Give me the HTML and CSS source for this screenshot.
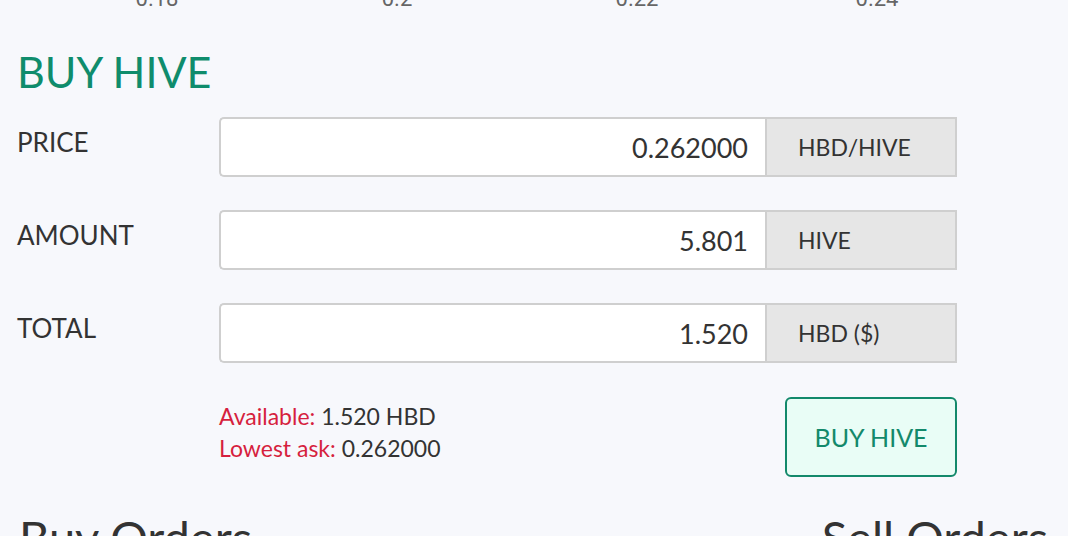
FILE: index.html
```html
<!DOCTYPE html>
<html lang="en">
<head>
    <meta charset="UTF-8">
    <meta name="viewport" content="width=device-width, initial-scale=1.0">
    <title>Market - Buy HIVE</title>
    <link rel="stylesheet" href="styles.css">
</head>
<body>
    <div class="chart-axis">
        <span>0.18</span>
        <span>0.2</span>
        <span>0.22</span>
        <span>0.24</span>
    </div>

    <div class="trade-form">
        <h1 class="trade-title">BUY HIVE</h1>

        <div class="form-grid">
            <label class="field-label" for="price">PRICE</label>
            <div class="input-group">
                <input id="price" class="field-input" type="text" value="0.262000">
                <span class="input-addon">HBD/HIVE</span>
            </div>

            <label class="field-label" for="amount">AMOUNT</label>
            <div class="input-group">
                <input id="amount" class="field-input" type="text" value="5.801">
                <span class="input-addon">HIVE</span>
            </div>

            <label class="field-label" for="total">TOTAL</label>
            <div class="input-group">
                <input id="total" class="field-input" type="text" value="1.520">
                <span class="input-addon">HBD ($)</span>
            </div>

            <div class="form-footer">
                <div class="balance-info">
                    <div><span class="info-key">Available:</span> 1.520 HBD</div>
                    <div><span class="info-key">Lowest ask:</span> 0.262000</div>
                </div>
                <button class="buy-button" type="button">BUY HIVE</button>
            </div>
        </div>
    </div>

    <div class="orders-header">
        <h2>Buy Orders</h2>
        <h2>Sell Orders</h2>
    </div>
</body>
</html>
```

FILE: styles.css
```css
body {
    margin: 0;
    background-color: #f7f8fc;
    font-family: Lato, "Noto Sans", sans-serif;
    color: #333333;
    overflow: hidden;
}

.chart-axis {
    display: grid;
    grid-template-columns: repeat(4, 240px);
    padding-left: 37px;
    margin-top: -12px;
    height: 22px;
    font-family: Roboto, "Liberation Sans", sans-serif;
    font-size: 22px;
    line-height: 22px;
    color: #666666;
    text-align: center;
}

.trade-form {
    padding-left: 17px;
}

.trade-title {
    margin: 36px 0 0 0;
    font-size: 43px;
    line-height: 52px;
    font-weight: 400;
    color: #0f8c6c;
}

.form-grid {
    display: grid;
    grid-template-columns: 202px 738px;
    row-gap: 33px;
    margin-top: 19px;
}

.field-label {
    padding-top: 10px;
    font-size: 26px;
    line-height: 31px;
}

.input-group {
    display: flex;
    height: 60px;
}

.field-input {
    width: 546px;
    box-sizing: border-box;
    border: 2px solid #cfcfcf;
    border-right: none;
    border-radius: 5px 0 0 5px;
    background-color: #ffffff;
    padding: 0 17px;
    text-align: right;
    font-family: inherit;
    font-size: 27px;
    color: #333333;
    outline: none;
}

.input-addon {
    display: flex;
    align-items: center;
    width: 192px;
    box-sizing: border-box;
    padding-left: 31px;
    border: 2px solid #cfcfcf;
    background-color: #e6e6e6;
    font-size: 23px;
    color: #333333;
}

.form-footer {
    grid-column: 2;
    display: flex;
    justify-content: space-between;
    align-items: flex-start;
    margin-top: 1px;
}

.balance-info {
    padding-top: 3px;
    font-size: 23px;
    line-height: 32px;
}

.info-key {
    color: #d61f3e;
}

.buy-button {
    width: 172px;
    height: 80px;
    border: 2px solid #13896b;
    border-radius: 6px;
    background-color: #e9fdf6;
    font-family: inherit;
    font-size: 25px;
    color: #13896b;
    cursor: pointer;
}

.orders-header {
    display: flex;
    justify-content: space-between;
    padding: 0 20px 0 19px;
    margin-top: 32px;
}

.orders-header h2 {
    margin: 0;
    font-size: 47px;
    line-height: 56px;
    font-weight: 400;
    color: #333333;
}
```
